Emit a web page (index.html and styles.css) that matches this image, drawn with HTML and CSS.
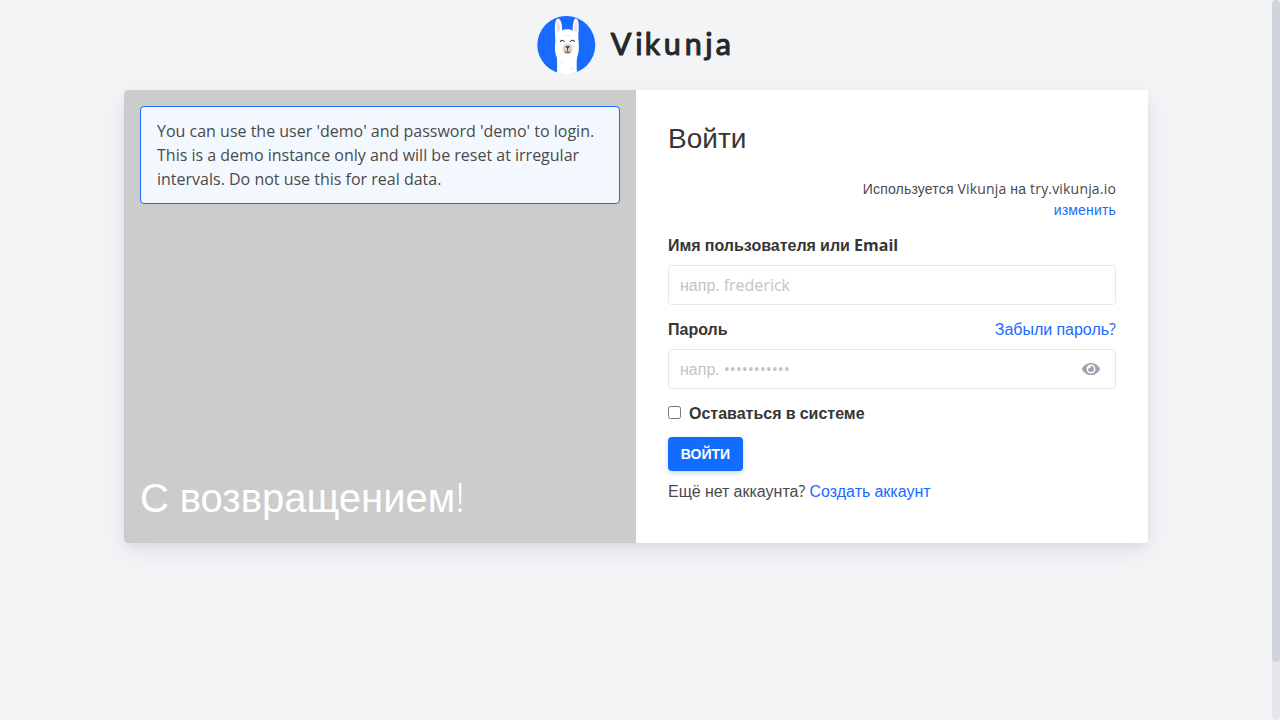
FILE: index.html
```html
<!DOCTYPE html>
<html lang="ru">
<head>
<meta charset="utf-8">
<title>Vikunja</title>
<link rel="stylesheet" href="styles.css">
</head>
<body>
<div class="page">
  <svg class="logo" width="200" height="60" viewBox="0 0 200 60" role="img" aria-label="Vikunja">
    <defs><clipPath id="disc"><circle cx="30.3" cy="30" r="29.2"/></clipPath></defs>
    <circle cx="30.3" cy="30" r="29" fill="#196aff"/>
    <g clip-path="url(#disc)">
      <path d="M20.8 61 C21.3 52 21.3 46 20.7 42 C18.6 38 18.6 32 19.4 26 C19.1 20 18.5 14 19.1 9 C19.4 5.5 20.8 3.3 22.4 3.6 C25.3 5 26.2 10 26.2 15.4 C29 13.9 33.4 13.8 36.6 15.6 C36.6 9 37.6 4.6 39.6 3.6 C41.8 3.4 42.8 7 42.7 12 C42.7 16 42.2 20 42.4 25 C43.3 31 43 37 41.2 42 C40.5 47 40.5 52 41.2 61 Z" fill="#fff"/>
      <path d="M21 17 C20 11 20.6 6.6 22.2 7 C24.3 8.5 24.8 12.5 24.1 15.6 Z" fill="#f5dfdf"/>
      <path d="M41.2 17 C41.9 11 41.4 6.4 39.8 6.7 C38.2 8.2 37.8 12 38.3 15.6 Z" fill="#f5dfdf"/>
      <path d="M26 20 q2 1 4-.3 q2 2.3 5 1 M22 46 q2 2 4 .5 l2 2.5 M33 55 l3-2 2 1" fill="none" stroke="#f0ebe8" stroke-width="1"/>
      <ellipse cx="31.5" cy="33.9" rx="4.9" ry="5.4" fill="#ddd2c4"/>
      <path d="M24.4 26.3 q2-2.2 3.8 .2 M34.4 26.5 q2-2.4 4 -.2" fill="none" stroke="#383b40" stroke-width="1.1" stroke-linecap="round"/>
      <path d="M29.7 31.6 h3.8 l-1.9 1.6 z M31.6 32 v4.6 M28.8 37 q2.8 1.1 5.6 0" fill="none" stroke="#4a4643" stroke-width="1"/>
    </g>
    <text class="wordmark" x="74.7 99.2 108.7 127.7 148.7 169.2 179.7" y="39.6">Vikunja</text>
  </svg>

  <main class="card">
    <section class="welcome">
      <div class="notice">You can use the user 'demo' and password 'demo' to login. This is a demo instance only and will be reset at irregular intervals. Do not use this for real data.</div>
      <h1 class="greeting">С возвращением<span class="latin thin">!</span></h1>
    </section>
    <section class="login">
      <h2 class="title">Войти</h2>
      <p class="server">Используется<span class="latin"> Vikunja </span>на<span class="latin"> try.vikunja.io</span><br><a class="link">изменить</a></p>
      <div class="label">Имя пользователя или<span class="latin"> Email</span></div>
      <div class="input">напр<span class="latin">. frederick</span></div>
      <div class="label row"><span>Пароль</span><a class="link normal">Забыли пароль<span class="latin">?</span></a></div>
      <div class="input password"><span>напр<span class="latin">. •••••••••••</span></span>
        <svg class="eye" width="18" height="16" viewBox="0 0 576 512" fill="currentColor"><path d="M572.52 241.4C518.29 135.59 410.93 64 288 64S57.68 135.64 3.48 241.41a32.35 32.35 0 0 0 0 29.19C57.71 376.41 165.07 448 288 448s230.32-71.64 284.52-177.41a32.35 32.35 0 0 0 0-29.19zM288 400a144 144 0 1 1 144-144 143.93 143.93 0 0 1-144 144zm0-240a95.31 95.31 0 0 0-25.31 3.79 47.85 47.85 0 0 1-66.9 66.9A95.78 95.78 0 1 0 288 160z"/></svg>
      </div>
      <label class="label check"><input class="box" type="checkbox">Оставаться в системе</label>
      <button class="submit">Войти</button>
      <p class="register">Ещё нет аккаунта<span class="latin">? </span><a class="link">Создать аккаунт</a></p>
    </section>
  </main>
</div>
<div class="scrollbar"><div class="thumb"></div></div>
</body>
</html>
```
FILE: styles.css
```css
* { box-sizing: border-box; }
body {
  margin: 0;
  height: 720px;
  overflow: hidden;
  background: #f3f4f6;
  color: #4a4a4a;
  font: 16px/24px "Liberation Sans", sans-serif;
  word-spacing: -0.018em;
}
h1, h2, p { margin: 0; font-weight: 400; }
.latin { font-family: "Open Sans", sans-serif; word-spacing: 0; line-height: 1; }
.thin { font-weight: 300; }
.page {
  width: 1272px;
  padding-top: 15px;
  display: flex;
  flex-direction: column;
  align-items: center;
}
.logo { display: block; height: 60px; margin-bottom: 15px; }
.wordmark {
  font: 400 30.5px Lato, sans-serif;
  fill: #25282a;
  stroke: #25282a;
  stroke-width: 1.1px;
  stroke-linejoin: round;
}
.card {
  width: 1024px;
  height: 453px;
  display: grid;
  grid-template-columns: 1fr 1fr;
  background: #fff;
  border-radius: 4px;
  box-shadow: 0 8px 24px -2px rgba(31, 41, 85, .1), 0 4px 10px -2px rgba(31, 41, 55, .06);
}
.welcome {
  display: flex;
  flex-direction: column;
  justify-content: space-between;
  padding: 16px 16px 17px;
  background: #ccc;
  border-radius: 4px 0 0 4px;
}
.notice {
  padding: 12px 16px;
  border: 1px solid #196aff;
  border-radius: 4px;
  background: #f3f8ff;
  font-family: "Open Sans", sans-serif;
  word-spacing: 0;
}
.greeting { color: #fff; font-size: 40px; line-height: 56px; }
.login { padding: 33px 32px 31px; }
.title { color: #363636; font-size: 28px; line-height: 32px; margin-bottom: 24px; }
.server { font-size: 14px; line-height: 21px; letter-spacing: .18px; text-align: right; margin-bottom: 13px; }
.link { color: #196aff; }
.label { color: #363636; font-weight: 700; margin-bottom: 7px; }
.row { display: flex; justify-content: space-between; }
.normal { font-weight: 400; }
.input {
  height: 40px;
  margin-bottom: 13px;
  padding: 8px 11px 6px;
  border: 1px solid #e5e7e9;
  border-radius: 4px;
  color: #c3c3c3;
}
.password { display: flex; justify-content: space-between; align-items: flex-start; padding-right: 15px; }
.eye { color: #9ca3af; margin-top: 3px; }
.check { display: flex; align-items: center; margin-bottom: 11px; }
.box { width: 13px; height: 13px; margin: 0 8px 4px 0; }
.submit {
  display: block;
  width: 75px;
  height: 34px;
  margin-bottom: 9px;
  padding: 0;
  border: 0;
  border-radius: 4px;
  background: #126dff;
  color: #fff;
  font: 700 14px/34px "Liberation Sans", sans-serif;
  text-transform: uppercase;
  box-shadow: 0 2px 5px rgba(31, 41, 55, .2);
}
.scrollbar { position: fixed; top: 0; right: 0; width: 8px; height: 720px; border-radius: 4px; background: #e5e7eb; }
.thumb { height: 662px; border-radius: 4px; background: #d1d5db; }
```
